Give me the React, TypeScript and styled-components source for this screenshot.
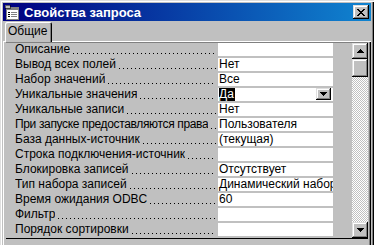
import styled, { createGlobalStyle } from 'styled-components'

const GlobalStyle = createGlobalStyle`
  html, body {
    margin: 0;
    padding: 0;
    background: #c0c0c0;
  }
  body {
    font-family: "Liberation Sans", Arial, sans-serif;
    font-size: 12px;
    color: #000;
  }
`

const rows = [
  { label: 'Описание', value: '' },
  { label: 'Вывод всех полей', value: 'Нет' },
  { label: 'Набор значений', value: 'Все' },
  { label: 'Уникальные значения', value: 'Да', selected: true, combo: true },
  { label: 'Уникальные записи', value: 'Нет' },
  { label: 'При запуске предоставляются права', value: 'Пользователя', condensed: true },
  { label: 'База данных-источник', value: '(текущая)' },
  { label: 'Строка подключения-источник', value: '' },
  { label: 'Блокировка записей', value: 'Отсутствует' },
  { label: 'Тип набора записей', value: 'Динамический набор' },
  { label: 'Время ожидания ODBC', value: '60' },
  { label: 'Фильтр', value: '' },
  { label: 'Порядок сортировки', value: '' },
]

const bevel = `
  background: #c0c0c0;
  box-shadow: inset -1px -1px #000, inset 1px 1px #dfdfdf,
    inset -2px -2px #808080, inset 2px 2px #fff;
`

const Window = styled.div`
  width: 374px;
  height: 245px;
  box-sizing: border-box;
  padding: 3px 3px 0 3px;
  background: #c0c0c0;
  box-shadow: inset 1px 1px #dfdfdf, inset 2px 2px #fff, inset -1px 0 #000,
    inset -2px 0 #808080;
  display: flex;
  flex-direction: column;
  overflow: hidden;
`

const TitleBar = styled.div`
  height: 18px;
  flex-shrink: 0;
  display: flex;
  align-items: center;
  gap: 4px;
  padding: 0 2px 0 1px;
  background: linear-gradient(to right, #000080, #1084d0);
`

const Title = styled.span`
  flex: 1;
  color: #fff;
  font-weight: bold;
  font-size: 13px;
  white-space: nowrap;
`

const CloseButton = styled.div`
  ${bevel}
  width: 16px;
  height: 14px;
  display: flex;
  align-items: center;
  justify-content: center;
`

const TabStrip = styled.div`
  margin-top: 1px;
  height: 20px;
  flex-shrink: 0;
  display: flex;
  padding-left: 2px;
  position: relative;
  z-index: 1;
`

const Tab = styled.div`
  height: 20px;
  box-sizing: border-box;
  padding: 0 5px 0 3px;
  line-height: 19px;
  background: #c0c0c0;
  border-radius: 2px 2px 0 0;
  box-shadow: inset 1px 1px #fff, inset -1px 0 #000, inset -2px 0 #808080;
`

const Panel = styled.div`
  flex: 1;
  margin-top: -1px;
  padding: 1px 3px 0 3px;
  box-shadow: inset 1px 1px #fff, inset -1px 0 #000, inset -2px 0 #808080;
`

const Grid = styled.div`
  display: flex;
  border-top: 1px solid #808080;
  border-bottom: 1px solid #000;
`

const Rows = styled.div`
  flex: 1;
  display: flex;
  flex-direction: column;
`

const Row = styled.div`
  height: 15px;
  box-sizing: border-box;
  padding-bottom: 2px;
  display: flex;
`

const LabelCell = styled.div`
  width: 203px;
  padding-left: 9px;
  display: flex;
  line-height: 13px;
  overflow: hidden;
  white-space: nowrap;
`

const LabelText = styled.span<{ $condensed?: boolean }>`
  flex-shrink: 1;
  min-width: 0;
  overflow: hidden;
  letter-spacing: ${(p) => (p.$condensed ? '-0.35px' : 'normal')};
`

const Leader = styled.span`
  flex: 1;
  min-width: 5px;
  margin-left: 3px;
  margin-right: 2px;
  background-image: linear-gradient(to right, #000 1px, transparent 1px);
  background-size: 4px 1px;
  background-repeat: repeat-x;
  background-position: 0 10px;
`

const ValueCell = styled.div`
  width: 115px;
  height: 13px;
  box-sizing: border-box;
  padding-left: 1px;
  background: #fff;
  display: flex;
  line-height: 13px;
  overflow: hidden;
  white-space: nowrap;
`

const Value = styled.span<{ $selected?: boolean }>`
  background: ${(p) => (p.$selected ? '#000' : 'transparent')};
  color: ${(p) => (p.$selected ? '#fff' : '#000')};
  padding-right: ${(p) => (p.$selected ? '1px' : '0')};
`

const ComboButton = styled.div`
  ${bevel}
  width: 15px;
  height: 12px;
  margin-left: auto;
  margin-right: 2px;
  flex-shrink: 0;
  display: flex;
  align-items: center;
  justify-content: center;
`

const ScrollBar = styled.div`
  width: 16px;
  display: flex;
  flex-direction: column;
  background: repeating-conic-gradient(#c0c0c0 0 25%, #fff 0 50%) 0 0 / 2px 2px;
`

const ScrollButton = styled.div`
  ${bevel}
  width: 16px;
  height: 16px;
  display: flex;
  align-items: center;
  justify-content: center;
`

const Thumb = styled.div`
  ${bevel}
  width: 16px;
  height: 18px;
`

const Track = styled.div`
  flex: 1;
`

const Arrow = ({ up }: { up?: boolean }) => (
  <svg width="7" height="4" viewBox="0 0 7 4" shapeRendering="crispEdges">
    {up ? (
      <path d="M3 0h1v1h1v1h1v1h1v1H0V3h1V2h1V1h1z" fill="#000" />
    ) : (
      <path d="M0 0h7v1H6v1H5v1H4v1H3V3H2V2H1V1H0z" fill="#000" />
    )}
  </svg>
)

const CloseIcon = () => (
  <svg width="8" height="7" viewBox="0 0 8 7" shapeRendering="crispEdges">
    <path
      d="M0 0h2v1h1v1h2V1h1V0h2v1H7v1H6v1H5v1h1v1h1v1h1v1H6V6H5V5H3v1H2v1H0V6h1V5h1V4h1V3H2V2H1V1H0z"
      fill="#000"
    />
  </svg>
)

const SheetIcon = () => (
  <svg width="16" height="16" viewBox="0 0 16 16" shapeRendering="crispEdges">
    <rect x="2" y="3" width="12" height="12" fill="#fff" stroke="#808080" />
    <rect x="2" y="3" width="12" height="3" fill="#808080" />
    <rect x="4" y="8" width="2" height="1" fill="#000" />
    <rect x="7" y="8" width="6" height="1" fill="#808080" />
    <rect x="4" y="10" width="2" height="1" fill="#000" />
    <rect x="7" y="10" width="6" height="1" fill="#808080" />
    <rect x="4" y="12" width="2" height="1" fill="#000" />
    <rect x="7" y="12" width="6" height="1" fill="#808080" />
    <rect x="1" y="1" width="5" height="3" fill="#c0c0c0" stroke="#000" strokeWidth="0.5" />
  </svg>
)

export default function App() {
  return (
    <>
      <GlobalStyle />
      <Window>
        <TitleBar>
          <SheetIcon />
          <Title>Свойства запроса</Title>
          <CloseButton>
            <CloseIcon />
          </CloseButton>
        </TitleBar>
        <TabStrip>
          <Tab>Общие</Tab>
        </TabStrip>
        <Panel>
          <Grid>
            <Rows>
              {rows.map((r) => (
                <Row key={r.label}>
                  <LabelCell>
                    <LabelText $condensed={r.condensed}>{r.label}</LabelText>
                    <Leader />
                  </LabelCell>
                  <ValueCell>
                    <Value $selected={r.selected}>{r.value}</Value>
                    {r.combo && (
                      <ComboButton>
                        <Arrow />
                      </ComboButton>
                    )}
                  </ValueCell>
                </Row>
              ))}
            </Rows>
            <ScrollBar>
              <ScrollButton>
                <Arrow up />
              </ScrollButton>
              <Thumb />
              <Track />
              <ScrollButton>
                <Arrow />
              </ScrollButton>
            </ScrollBar>
          </Grid>
        </Panel>
      </Window>
    </>
  )
}
